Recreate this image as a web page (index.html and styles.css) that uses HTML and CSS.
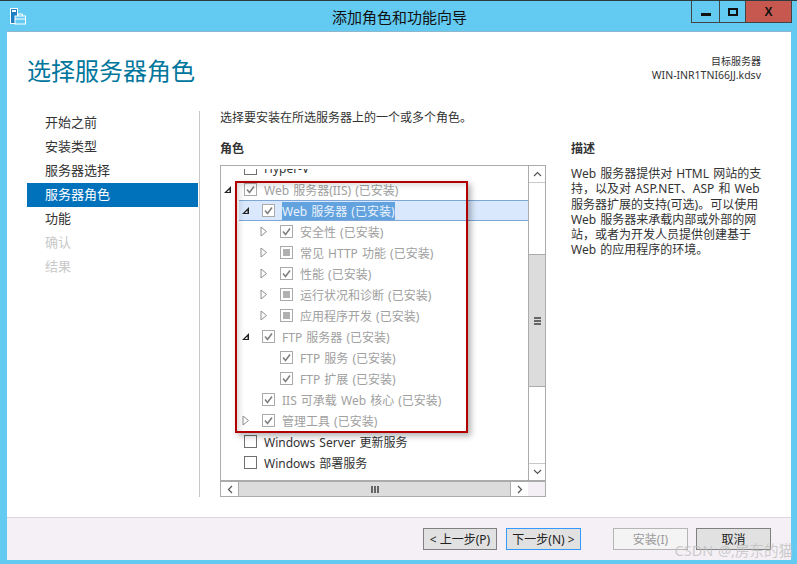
FILE: index.html
```html
<!DOCTYPE html>
<html lang="zh-CN">

<head>
  <meta charset="UTF-8" />
  <title>添加角色和功能向导</title>
  <link rel="stylesheet" href="styles.css">
</head>

<body>
  <svg class="defs" width="0" height="0">
    <symbol id="tick" viewBox="0 0 13 13"><path d="M3 6.5 L5.5 9.5 L10 3.5" fill="none" stroke="currentColor" stroke-width="1.6" /></symbol>
    <symbol id="open" viewBox="0 0 9 9"><path d="M8 1 V8 H1 Z M6.5 4.5 L3.8 7 H6.5 Z" fill="#222" fill-rule="evenodd" /></symbol>
    <symbol id="closed" viewBox="0 0 9 11"><path d="M2 1 L7.5 5.5 L2 10 Z" fill="#fff" stroke="#8e8e8e" /></symbol>
  </svg>

  <div class="window">
    <div class="titlebar">
      <svg class="app-icon" width="17" height="17" viewBox="0 0 17 17">
        <rect x="1.5" y="0.5" width="7" height="15" fill="#1f7fc4" stroke="#fff" />
        <rect x="3" y="2" width="4" height="2" fill="#fff" />
        <rect x="6" y="8" width="10.5" height="8" fill="#63caf2" stroke="#fff" />
        <path d="M9 8 V6 H13.5 V8 M6 11 H16.5" fill="none" stroke="#fff" />
      </svg>
      <div class="title">添加角色和功能向导</div>
      <div class="controls">
        <div class="ctl ctl-min"><span></span></div>
        <div class="ctl ctl-max"><span></span></div>
        <div class="ctl ctl-close">X</div>
      </div>
    </div>

    <div class="page">
      <div class="header">
        <h1>选择服务器角色</h1>
        <div class="target">
          <div>目标服务器</div>
          <div class="target-name">WIN-INR1TNI66JJ.kdsv</div>
        </div>
      </div>

      <div class="content">
        <ul class="steps">
          <li>开始之前</li>
          <li>安装类型</li>
          <li>服务器选择</li>
          <li class="active">服务器角色</li>
          <li>功能</li>
          <li class="off">确认</li>
          <li class="off">结果</li>
        </ul>

        <div class="main">
          <p class="intro">选择要安装在所选服务器上的一个或多个角色。</p>
          <div class="columns">
            <div class="roles">
              <h2>角色</h2>
              <div class="listbox">
                <div class="tree">
                  <div class="rows">
                    <div class="row"><span class="exp"></span><span class="box"></span><span>Hyper-V</span></div>
                    <div class="row dim"><span class="exp"><svg width="9" height="9"><use href="#open" /></svg></span><span class="box"><svg><use href="#tick" /></svg></span><span>Web 服务器(IIS) (已安装)</span></div>
                    <div class="row dim lv1 selected"><span class="exp"><svg width="9" height="9"><use href="#open" /></svg></span><span class="box"><svg><use href="#tick" /></svg></span><span class="hl">Web 服务器 (已安装)</span></div>
                    <div class="row dim lv2"><span class="exp"><svg width="9" height="11"><use href="#closed" /></svg></span><span class="box"><svg><use href="#tick" /></svg></span><span>安全性 (已安装)</span></div>
                    <div class="row dim lv2"><span class="exp"><svg width="9" height="11"><use href="#closed" /></svg></span><span class="box"><i></i></span><span>常见 HTTP 功能 (已安装)</span></div>
                    <div class="row dim lv2"><span class="exp"><svg width="9" height="11"><use href="#closed" /></svg></span><span class="box"><svg><use href="#tick" /></svg></span><span>性能 (已安装)</span></div>
                    <div class="row dim lv2"><span class="exp"><svg width="9" height="11"><use href="#closed" /></svg></span><span class="box"><i></i></span><span>运行状况和诊断 (已安装)</span></div>
                    <div class="row dim lv2"><span class="exp"><svg width="9" height="11"><use href="#closed" /></svg></span><span class="box"><i></i></span><span>应用程序开发 (已安装)</span></div>
                    <div class="row dim lv1"><span class="exp"><svg width="9" height="9"><use href="#open" /></svg></span><span class="box"><svg><use href="#tick" /></svg></span><span>FTP 服务器 (已安装)</span></div>
                    <div class="row dim lv2"><span class="exp"></span><span class="box"><svg><use href="#tick" /></svg></span><span>FTP 服务 (已安装)</span></div>
                    <div class="row dim lv2"><span class="exp"></span><span class="box"><svg><use href="#tick" /></svg></span><span>FTP 扩展 (已安装)</span></div>
                    <div class="row dim lv1"><span class="exp"></span><span class="box"><svg><use href="#tick" /></svg></span><span>IIS 可承载 Web 核心 (已安装)</span></div>
                    <div class="row dim lv1"><span class="exp"><svg width="9" height="11"><use href="#closed" /></svg></span><span class="box"><svg><use href="#tick" /></svg></span><span>管理工具 (已安装)</span></div>
                    <div class="row"><span class="exp"></span><span class="box"></span><span>Windows Server 更新服务</span></div>
                    <div class="row"><span class="exp"></span><span class="box"></span><span>Windows 部署服务</span></div>
                  </div>
                </div>

                <div class="vscroll">
                  <div class="arrow arrow-up"><svg width="9" height="6" viewBox="0 0 9 6"><path d="M1 5 L4.5 1.5 L8 5" fill="none" stroke="#555" stroke-width="1.2" /></svg></div>
                  <div class="vtrack">
                    <div class="vthumb"><span></span><span></span><span></span></div>
                  </div>
                  <div class="arrow arrow-down"><svg width="9" height="6" viewBox="0 0 9 6"><path d="M1 1 L4.5 4.5 L8 1" fill="none" stroke="#555" stroke-width="1.2" /></svg></div>
                </div>

                <div class="hscroll">
                  <div class="arrow"><svg width="6" height="9" viewBox="0 0 6 9"><path d="M5 1 L1.5 4.5 L5 8" fill="none" stroke="#555" stroke-width="1.2" /></svg></div>
                  <div class="hthumb"><span></span><span></span><span></span></div>
                  <div class="arrow"><svg width="6" height="9" viewBox="0 0 6 9"><path d="M1 1 L4.5 4.5 L1 8" fill="none" stroke="#555" stroke-width="1.2" /></svg></div>
                </div>
                <div class="corner"></div>
              </div>
            </div>

            <div class="desc">
              <h2>描述</h2>
              <p>Web 服务器提供对 HTML 网站的支持，以及对 ASP.NET、ASP 和 Web 服务器扩展的支持(可选)。可以使用 Web 服务器来承载内部或外部的网站，或者为开发人员提供创建基于 Web 的应用程序的环境。</p>
            </div>
          </div>
        </div>
      </div>
    </div>

    <div class="footer">
      <button class="btn btn-prev">&lt; 上一步(P)</button>
      <button class="btn btn-next">下一步(N) &gt;</button>
      <button class="btn btn-off">安装(I)</button>
      <button class="btn">取消</button>
    </div>

    <!-- annotation and watermark sit over the shot -->
    <div class="redbox"></div>
    <div class="watermark">CSDN @,房东的猫</div>
  </div>
</body>

</html>
```

FILE: styles.css
```css
/* Global Styles */
* {
  box-sizing: border-box;
  margin: 0;
  padding: 0;
}

html,
body {
  width: 797px;
  height: 564px;
  overflow: hidden;
}

body {
  font-family: "Noto Sans", "Noto Sans CJK SC", sans-serif;
  font-size: 12px;
  word-spacing: 1px;
  color: #333;
}

.defs {
  position: absolute;
}

/* Window frame */
.window {
  position: relative;
  display: flex;
  flex-direction: column;
  width: 797px;
  height: 564px;
  padding: 0 6px 4px 7px;
  background: #63caf2;
  border-top: 1px solid #2d3a40;
}

.titlebar {
  position: relative;
  flex: none;
  display: flex;
  justify-content: center;
  height: 31px;
  margin-right: -1px;
  border-bottom: 1px solid #8fb6cc;
}

.app-icon {
  position: absolute;
  left: 2px;
  top: 7px;
}

.title {
  padding-top: 6px;
  font-size: 15px;
  line-height: 20px;
  color: #111;
}

.controls {
  position: absolute;
  top: 0;
  right: 0;
  display: flex;
  height: 22px;
  border: 1px solid #444;
  border-top: none;
}

.ctl {
  display: flex;
  align-items: center;
  justify-content: center;
  width: 28px;
  border-right: 1px solid #444;
}

.ctl-min span {
  width: 10px;
  height: 3px;
  margin-top: 6px;
  background: #111;
}

.ctl-max {
  width: 26px;
}

.ctl-max span {
  width: 10px;
  height: 8px;
  border: 2px solid #111;
}

.ctl-close {
  width: 45px;
  border-right: none;
  background: #c75850;
  color: #111;
  font-family: "Liberation Sans", sans-serif;
  font-size: 12px;
  font-weight: 700;
}

/* Page */
.page {
  flex: none;
  height: 485px;
  background: #fff;
}

.header {
  display: flex;
  justify-content: space-between;
  height: 79px;
  padding: 0 30px 0 20px;
}

h1 {
  padding-top: 21px;
  font-size: 24px;
  font-weight: 400;
  line-height: 36px;
  color: #00769c;
}

.target {
  padding-top: 22px;
  font-size: 10px;
  line-height: 14px;
  text-align: right;
}

.target-name {
  font-size: 10.5px;
}

.content {
  display: flex;
  height: 386px;
}

.steps {
  flex: none;
  width: 173px;
  margin-left: 20px;
  list-style: none;
  border-right: 1px solid #c8c8c8;
  font-size: 13px;
}

.steps li {
  height: 24px;
  width: 171px;
  padding-left: 18px;
  line-height: 23px;
}

.steps .active {
  background: #0072bc;
  color: #fff;
}

.steps .off {
  color: #c8c8c8;
}

.main {
  flex: 1;
  padding-left: 20px;
}

.intro {
  line-height: 14px;
}

.columns {
  display: flex;
  margin-top: 16px;
}

h2 {
  height: 24px;
  font-size: 12px;
  font-weight: 700;
  line-height: 16px;
}

/* Role list */
.roles {
  flex: none;
  width: 326px;
}

.listbox {
  display: grid;
  grid-template-columns: 1fr 17px;
  grid-template-rows: 1fr 16px;
  height: 332px;
  border: 1px solid #ababab;
}

.tree {
  margin-top: 3px;
  overflow: hidden;
}

.rows {
  margin-top: -11px;
}

.row {
  display: flex;
  align-items: center;
  height: 21px;
  white-space: nowrap;
}

.dim {
  color: #a0a0a0;
}

.lv1 {
  padding-left: 18px;
}

.lv2 {
  padding-left: 36px;
}

.selected {
  margin-left: 18px;
  padding-left: 0;
  background: #d9e8fc;
  border-top: 1px solid #7da7d9;
  border-bottom: 1px solid #7da7d9;
}

.hl {
  background: #62a2de;
  color: #eaf3fc;
}

.exp {
  flex: none;
  display: flex;
  align-items: center;
  justify-content: center;
  width: 23px;
  height: 13px;
  padding-right: 10px;
}

.box {
  flex: none;
  display: flex;
  align-items: center;
  justify-content: center;
  width: 13px;
  height: 13px;
  margin-right: 7px;
  border: 1px solid #707070;
  background: #fff;
}

.dim .box {
  border-color: #aaa;
  color: #808080;
}

.box svg {
  flex: none;
  width: 13px;
  height: 13px;
}

.box i {
  width: 7px;
  height: 7px;
  background: #b0b0b0;
}

/* Scroll bars */
.vscroll {
  display: flex;
  flex-direction: column;
  border-left: 1px solid #ababab;
}

.arrow {
  flex: none;
  display: flex;
  align-items: center;
  justify-content: center;
  height: 17px;
  width: 100%;
}

.arrow-up {
  border-bottom: 1px solid #c8c8c8;
}

.arrow-down {
  border-top: 1px solid #c8c8c8;
}

.vtrack {
  flex: 1;
  padding-top: 71px;
  padding-bottom: 76px;
}

.vthumb {
  display: flex;
  flex-direction: column;
  align-items: center;
  justify-content: center;
  gap: 1px;
  height: 100%;
  background: #dcdcdc;
  border-top: 1px solid #ababab;
  border-bottom: 1px solid #ababab;
}

.vthumb span {
  width: 7px;
  height: 2px;
  background: #666;
}

.hscroll {
  display: flex;
  border-top: 2px solid #ababab;
}

.hscroll .arrow {
  width: 17px;
  height: 100%;
}

.hthumb {
  flex: 1;
  display: flex;
  align-items: center;
  justify-content: center;
  gap: 1px;
  background: #dcdcdc;
  border-left: 1px solid #ababab;
  border-right: 1px solid #ababab;
}

.hthumb span {
  width: 2px;
  height: 7px;
  background: #666;
}

.corner {
  background: #f3eff4;
  border-top: 2px solid #ababab;
}

/* Description */
.desc {
  flex: none;
  width: 194px;
  margin-left: 25px;
}

.desc h2 {
  height: 25px;
}

.desc p {
  line-height: 15.3px;
}

/* Footer */
.footer {
  flex: 1;
  display: flex;
  align-items: flex-start;
  gap: 8px;
  padding: 10px 20px 0 0;
  justify-content: flex-end;
  background: #f4f0f5;
  border-top: 1px solid #d8d8d8;
}

.btn {
  width: 75px;
  height: 22px;
  background: #e1e1e1;
  border: 1px solid #808080;
  font-family: inherit;
  font-size: 12px;
  color: #222;
}

.btn-prev {
  width: 74px;
  margin-right: 1px;
}

.btn-next {
  border-color: #3399ff;
}

.btn-off {
  margin-left: 24px;
  background: #f4f4f4;
  border-color: #b5b5b5;
  color: #9a9a9a;
}

/* Overlays */
.redbox {
  position: absolute;
  left: 235px;
  top: 180px;
  width: 233px;
  height: 252px;
  border: 2px solid #b00000;
  box-shadow: 3px 3px 6px rgba(0, 0, 0, 0.3), inset 4px 4px 6px -2px rgba(0, 0, 0, 0.16);
  pointer-events: none;
}

.watermark {
  position: absolute;
  right: 4px;
  top: 540px;
  font-size: 14.5px;
  line-height: 18px;
  color: rgba(190, 190, 190, 0.75);
}
```
